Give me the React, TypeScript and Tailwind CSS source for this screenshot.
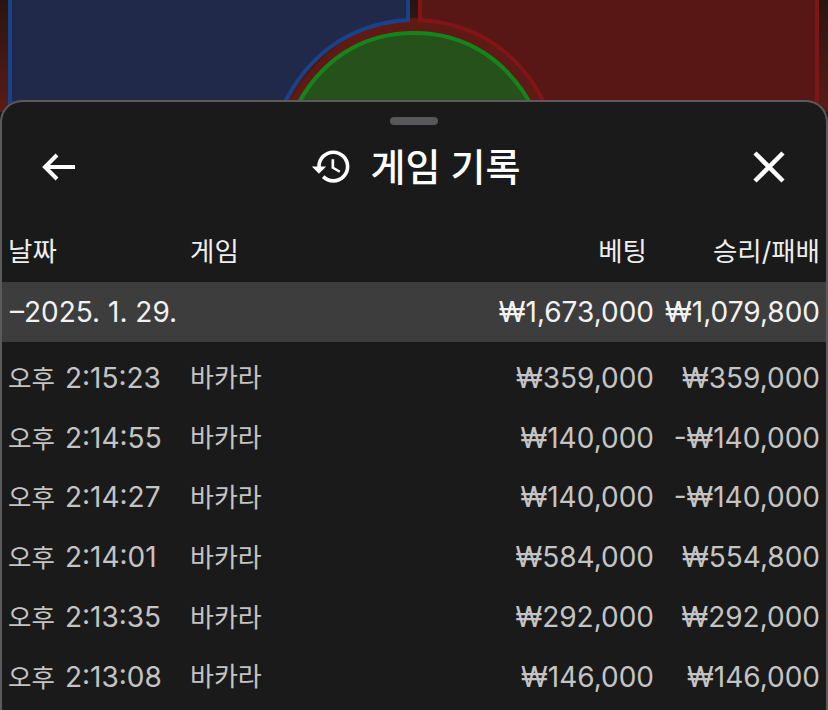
import { MdHistory } from "react-icons/md";

const rows = [
  { time: "2:15:23", bet: "₩359,000", win: "₩359,000" },
  { time: "2:14:55", bet: "₩140,000", win: "-₩140,000" },
  { time: "2:14:27", bet: "₩140,000", win: "-₩140,000" },
  { time: "2:14:01", bet: "₩584,000", win: "₩554,800" },
  { time: "2:13:35", bet: "₩292,000", win: "₩292,000" },
  { time: "2:13:08", bet: "₩146,000", win: "₩146,000" },
];

function TableBackdrop() {
  return (
    <svg viewBox="0 0 828 112" className="h-[112px] w-[828px]">
      <defs>
        <linearGradient id="edge" x1="0" x2="0" y1="0" y2="1">
          <stop offset="0" stopColor="#2a1410" />
          <stop offset="1" stopColor="#5a1c16" />
        </linearGradient>
      </defs>
      <rect width="828" height="112" fill="url(#edge)" />
      <path d="M420 -4H817V112H550C525 60 485 24 420 20Z" fill="#581715" />
      <path d="M285 112C310 60 350 22 414 18C480 22 520 60 549 112Z" fill="#5f1a15" />
      <path d="M10 -4H408V20C345 24 305 60 283 106V112H10Z" fill="#20294a" stroke="#17428c" strokeWidth="4" />
      <path d="M817 -4V112M549 112C525 60 485 24 420 20V-4" fill="none" stroke="#7f1517" strokeWidth="4" />
      <path d="M294 112C318 62 360 33 414 33C468 33 510 62 535 112Z" fill="#27511a" stroke="#14851c" strokeWidth="4" />
    </svg>
  );
}

export default function App() {
  return (
    <div className="h-[710px] w-[828px] overflow-hidden bg-[#1b1a1b] font-['Inter','Noto_Sans_CJK_KR',sans-serif]">
      <div className="h-[100px]">
        <TableBackdrop />
      </div>
      <div className="relative h-[610px] rounded-t-[22px] border-x-2 border-t-2 border-[#5a5a5c] bg-[#1b1a1b]">
        <div className="mx-auto mt-[15px] h-2 w-[48px] rounded-full bg-[#58585a]" />
        <div className="flex h-[83px] items-center justify-between pl-[37px] pr-[38px] text-white">
          <svg width="38" height="38" viewBox="0 0 38 38" fill="none" stroke="currentColor" strokeWidth="4">
            <path d="M36 19H6M18 7L6 19L18 31" />
          </svg>
          <div className="ml-[3px] flex items-center gap-[18px]">
            <MdHistory size={43} />
            <span className="text-[38px] font-medium leading-none">게임 기록</span>
          </div>
          <svg width="38" height="38" viewBox="0 0 38 38" fill="none" stroke="currentColor" strokeWidth="4.5">
            <path d="M5 5L33 33M33 5L5 33" />
          </svg>
        </div>

        <div className="mt-[14px] flex h-[60px] items-center px-[6px] text-[26.5px] text-[#eeeeee]">
          <span className="w-[182px]">날짜</span>
          <span className="flex-1">게임</span>
          <span className="w-[100px] text-right">베팅</span>
          <span className="w-[173px] text-right">승리/패배</span>
        </div>
        <div className="flex h-[60px] items-center bg-[#3e3d3e] pl-[8px] pr-[6px] text-[28px] text-[#f2f2f2]">
          <span className="flex-1">–2025. 1. 29.</span>
          <span className="text-right">₩1,673,000</span>
          <span className="w-[166px] text-right">₩1,079,800</span>
        </div>

        <div className="mt-[6px] text-[28px] text-[#c4c4c4]">
          {rows.map((r) => (
            <div key={r.time} className="flex h-[59.8px] items-center px-[6px]">
              <span className="flex w-[182px] items-baseline gap-[10px] whitespace-nowrap">
                <span className="text-[25.5px]">오후</span>
                <span>{r.time}</span>
              </span>
              <span className="flex-1 text-[26px]">바카라</span>
              <span className="text-right">{r.bet}</span>
              <span className="w-[166px] text-right">{r.win}</span>
            </div>
          ))}
        </div>
      </div>
    </div>
  );
}
